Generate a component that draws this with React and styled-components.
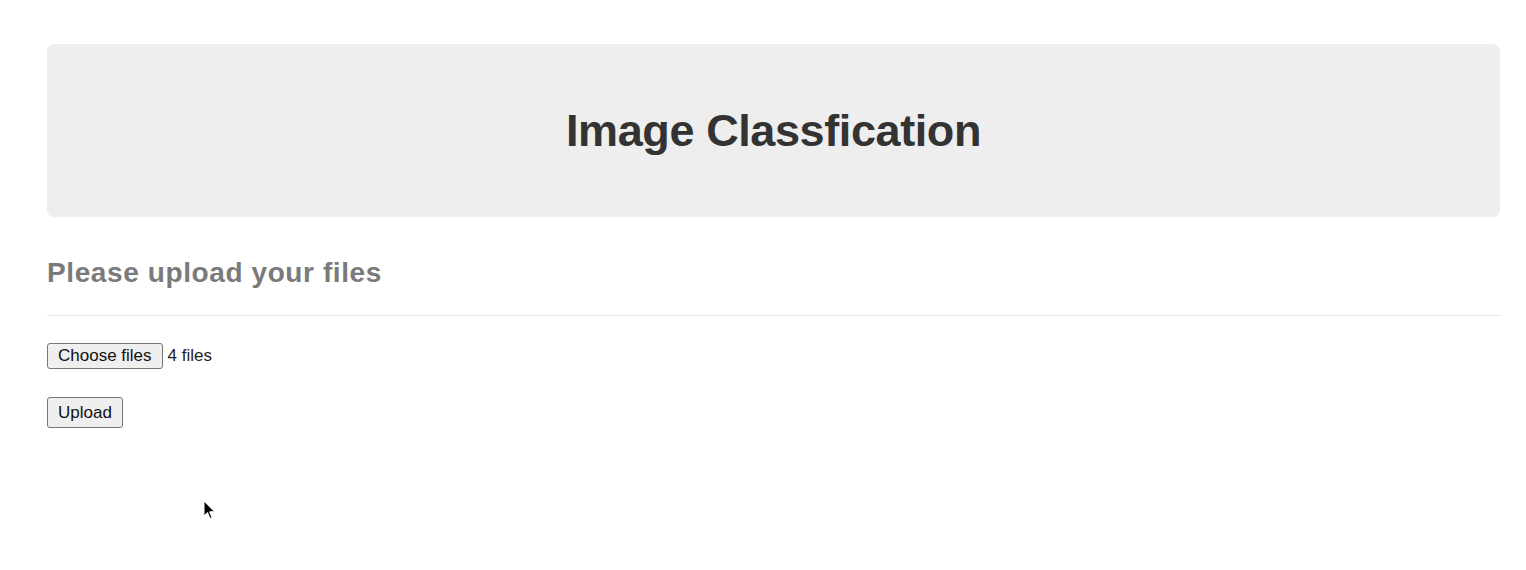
import React from "react";
import styled, { createGlobalStyle } from "styled-components";

const GlobalStyle = createGlobalStyle`
  html, body {
    margin: 0;
    padding: 0;
    background: #fff;
    font-family: "Liberation Sans", Arial, sans-serif;
    color: #333;
  }
`;

const Page = styled.div`
  position: relative;
  height: 570px;
  overflow: hidden;
  padding: 44px 26px 0 47px;
  box-sizing: border-box;
`;

const Jumbotron = styled.div`
  background: #eeeeee;
  border-radius: 7px;
  height: 173px;
  display: flex;
  align-items: center;
  justify-content: center;
`;

const Title = styled.h1`
  margin: 0;
  font-size: 45px;
  font-weight: 700;
  color: #333;
  letter-spacing: -0.4px;
`;

const SubTitle = styled.h3`
  margin: 40px 0 0;
  font-size: 28px;
  font-weight: 700;
  color: #7a7a7a;
  line-height: 32px;
  letter-spacing: 0.6px;
`;

const Rule = styled.hr`
  border: 0;
  border-top: 1px solid #e6e6e6;
  margin: 26px 0 27px;
`;

const Row = styled.div`
  display: flex;
  align-items: center;
  gap: 5px;
  margin-bottom: ${(p) => p.$gap || 0}px;
`;

const NativeButton = styled.button`
  font-family: "Liberation Sans", Arial, sans-serif;
  font-size: 17px;
  color: #111;
  background: #efefef;
  border: 1px solid #767676;
  border-radius: 3px;
  padding: 0 10px;
  height: ${(p) => p.$h || 26}px;
  cursor: default;
`;

const FileLabel = styled.span`
  font-size: 17px;
  color: #222;
`;

const Cursor = styled.svg`
  position: absolute;
  left: 203px;
  top: 500px;
`;

export default function App() {
  return (
    <>
      <GlobalStyle />
      <Page>
        <Jumbotron>
          <Title>Image Classfication</Title>
        </Jumbotron>
        <SubTitle>Please upload your files</SubTitle>
        <Rule />
        <Row $gap={28}>
          <NativeButton>Choose files</NativeButton>
          <FileLabel>4 files</FileLabel>
        </Row>
        <Row>
          <NativeButton $h={31}>Upload</NativeButton>
        </Row>
        <Cursor width="14" height="22" viewBox="0 0 14 22">
          <path
            d="M1 1 L1 16 L4.5 12.5 L7 18.5 L9 17.7 L6.6 11.8 L11.5 11.8 Z"
            fill="#000"
            stroke="#fff"
            strokeWidth="1"
          />
        </Cursor>
      </Page>
    </>
  );
}
